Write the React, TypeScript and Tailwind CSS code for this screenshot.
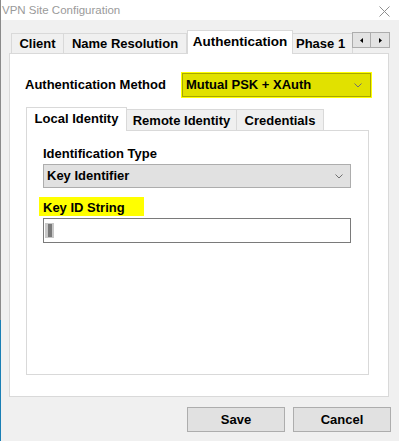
import React from "react";

const F = { fontFamily: '"Liberation Sans", Arial, sans-serif' };

function Chevron() {
  return (
    <svg width="8" height="5" viewBox="0 0 8 5" className="block">
      <polyline points="0.5,0.5 4,4 7.5,0.5" fill="none" stroke="#707070" strokeWidth="1" />
    </svg>
  );
}

export default function App() {
  return (
    <div
      className="w-[399px] h-[441px] bg-[#f0f0f0] flex flex-row overflow-hidden text-black font-bold text-[13px] leading-[16px]"
      style={F}
    >
      {/* left window edge */}
      <div className="w-[1px] flex flex-col shrink-0">
        <div className="h-[320px] bg-[#8a8a8a]" />
        <div className="flex-1 bg-[#1a7fb5]" />
      </div>

      <div className="flex-1 flex flex-col">
        {/* title bar */}
        <div className="h-[20px] bg-white flex items-center justify-between pl-[1px] pr-[9px]">
          <span className="font-normal text-[11.5px] text-[#9a9a9a] leading-[14px]">VPN Site Configuration</span>
          <svg width="11" height="11" viewBox="0 0 11 11" className="block mt-[3px]">
            <line x1="0.5" y1="0.5" x2="10.5" y2="10.5" stroke="#8f8f8f" strokeWidth="1" />
            <line x1="10.5" y1="0.5" x2="0.5" y2="10.5" stroke="#8f8f8f" strokeWidth="1" />
          </svg>
        </div>

        {/* top tab strip */}
        <div className="mt-[10px] ml-[10px] h-[23px] flex items-end">
          <div className="w-[53px] h-[20px] border border-b-0 border-[#d9d9d9] bg-[#f0f0f0] flex justify-center pt-[2px]">Client</div>
          <div className="w-[123px] h-[20px] border border-b-0 border-l-0 border-[#d9d9d9] bg-[#f0f0f0] flex justify-center pt-[2px]">Name Resolution</div>
          <div className="relative z-10 w-[106px] h-[24px] -mb-px border border-b-0 border-[#d9d9d9] bg-white flex justify-center pt-[3px] text-[13.5px]">Authentication</div>
          <div className="w-[60px] h-[20px] border border-b-0 border-l-0 border-[#d9d9d9] bg-[#f0f0f0] pl-[3px] pt-[2px] overflow-hidden whitespace-nowrap">Phase 1</div>
          {/* scroll buttons */}
          <div className="self-start mt-[2px] -ml-[1px] flex relative z-10">
            <div className="w-[19px] h-[16px] border border-[#adadad] bg-[#e3e3e3] flex items-center justify-center">
              <svg width="3" height="5" viewBox="0 0 3 5" className="block"><polygon points="3,0 0,2.5 3,5" fill="#000" /></svg>
            </div>
            <div className="w-[19px] h-[16px] border border-l-0 border-[#adadad] bg-[#e3e3e3] flex items-center justify-center">
              <svg width="3" height="5" viewBox="0 0 3 5" className="block"><polygon points="0,0 3,2.5 0,5" fill="#000" /></svg>
            </div>
          </div>
        </div>

        {/* main tab panel */}
        <div className="ml-[8px] w-[380px] h-[344px] border border-[#d9d9d9] bg-white flex flex-col">
          <div className="mt-[18px] pl-[15px] flex items-center">
            <div className="w-[156px]">Authentication Method</div>
            <div className="w-[191px] h-[26px] bg-[#ffff00] p-px">
              <div className="h-[24px] border border-[#a8a800] bg-[#e1e100] flex items-center justify-between pl-[3px] pr-[8px]">
                <span>Mutual PSK + XAuth</span>
                <Chevron />
              </div>
            </div>
          </div>

          {/* inner tabs */}
          <div className="mt-[9px] ml-[16px] h-[23px] flex items-end">
            <div className="relative z-10 w-[101px] h-[24px] -mb-px border border-b-0 border-[#d9d9d9] bg-white flex justify-center pt-[3px]">Local Identity</div>
            <div className="w-[110px] h-[21px] border border-b-0 border-l-0 border-[#d9d9d9] bg-[#f0f0f0] flex justify-center pt-[3px]">Remote Identity</div>
            <div className="w-[87px] h-[21px] border border-b-0 border-l-0 border-[#d9d9d9] bg-[#f0f0f0] flex justify-center pt-[3px]">Credentials</div>
          </div>

          <div className="ml-[16px] w-[343px] h-[245px] border border-[#d9d9d9] bg-white pl-[16px] pt-[15px] flex flex-col">
            <div>Identification Type</div>
            <div className="mt-[2px] w-[308px] h-[24px] border border-[#adadad] bg-[#e1e1e1] flex items-center justify-between pl-[3px] pr-[7px]">
              <span>Key Identifier</span>
              <Chevron />
            </div>
            <div className="mt-[9px] -ml-[4px] w-[105px] h-[19px] bg-[#ffff00] pl-[4px] pt-[3px]">Key ID String</div>
            <div className="mt-[2px] w-[308px] h-[25px] border border-[#7a7a7a] bg-white flex items-center pl-[1px]">
              <div className="w-[9px] h-[15px] bg-[#c8c8c8] flex items-center justify-center">
                <div className="w-[4px] h-[13px] bg-[#7a7a7a]" />
              </div>
            </div>
          </div>
        </div>

        {/* buttons */}
        <div className="mt-[10px] flex justify-end gap-[8px] pr-[8px]">
          <div className="w-[98px] h-[25px] border border-[#adadad] bg-[#e1e1e1] flex items-center justify-center">Save</div>
          <div className="w-[98px] h-[25px] border border-[#adadad] bg-[#e1e1e1] flex items-center justify-center">Cancel</div>
        </div>
      </div>
    </div>
  );
}
